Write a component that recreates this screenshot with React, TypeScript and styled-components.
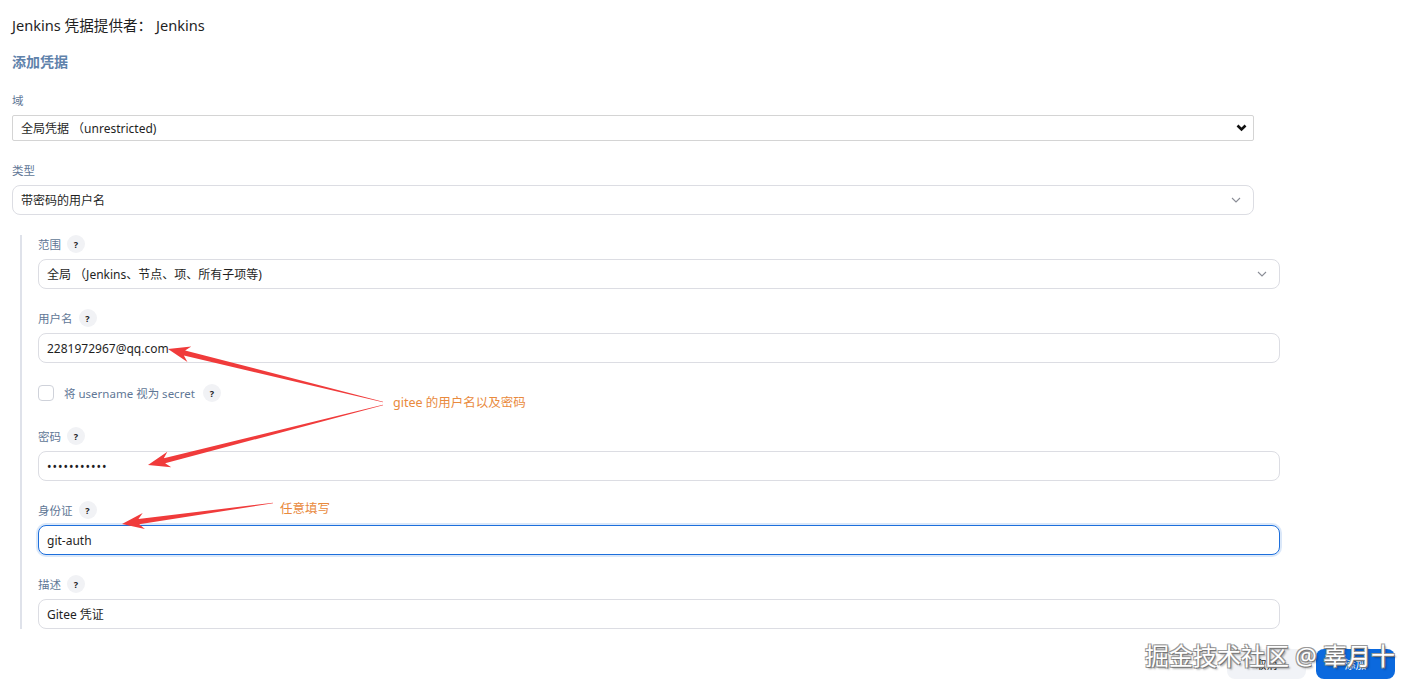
import styled, { createGlobalStyle, css } from "styled-components";

const GlobalStyle = createGlobalStyle`
  html, body {
    margin: 0;
    padding: 0;
    background: #ffffff;
  }
  body {
    font-family: "Noto Sans", "Noto Sans CJK SC", sans-serif;
    color: #1f1f1f;
  }
`;

const Page = styled.div`
  position: relative;
  width: 1427px;
  height: 690px;
  overflow: hidden;
  padding: 16px 0 0 12px;
  box-sizing: border-box;
`;

const Provider = styled.div`
  font-size: 14.6px;
  line-height: 18px;
  color: #1f1f1f;
`;

const Heading = styled.h2`
  margin: 19px 0 0;
  font-size: 14px;
  line-height: 18px;
  font-weight: 700;
  color: #5f82ab;
`;

const Field = styled.div<{ $gap?: number }>`
  display: flex;
  flex-direction: column;
  width: 1242px;
  margin-top: ${(p) => p.$gap ?? 0}px;
`;

const Label = styled.div`
  display: flex;
  align-items: center;
  gap: 6px;
  height: 18px;
  margin-bottom: 6px;
  font-size: 11.5px;
  color: #5f7796;
`;

const Help = styled.span`
  display: inline-flex;
  align-items: center;
  justify-content: center;
  width: 18px;
  height: 18px;
  border-radius: 50%;
  background: #f1f2f5;
  color: #222;
  font-size: 9px;
  font-weight: 700;
`;

const Control = styled.div<{ $plain?: boolean; $focus?: boolean }>`
  display: flex;
  align-items: center;
  justify-content: space-between;
  height: 30px;
  box-sizing: border-box;
  padding: 0 12px 0 8px;
  border: 1px solid #dcdde3;
  border-radius: 8px;
  background: #fff;
  font-size: 12px;
  color: #1f1f1f;
  ${(p) =>
    p.$plain &&
    css`
      height: 26px;
      border-radius: 2px;
      border-color: #d4d4d4;
      padding-right: 6px;
    `}
  ${(p) =>
    p.$focus &&
    css`
      border: 1.5px solid #1d6fdc;
      box-shadow: 0 0 0 2px rgba(29, 111, 220, 0.16);
    `}
`;

const Section = styled.div`
  margin: 20px 0 0 8px;
  padding: 0 0 0 16px;
  border-left: 2px solid #dfe2ea;
  display: flex;
  flex-direction: column;
`;

const CheckRow = styled.div`
  display: flex;
  align-items: center;
  gap: 10px;
  margin-top: 21px;
  height: 18px;
  font-size: 11.5px;
  color: #5f7796;
`;

const Box = styled.span`
  width: 16px;
  height: 16px;
  box-sizing: border-box;
  border: 1px solid #cfd2da;
  border-radius: 4px;
`;

const HelpGap = styled.span`
  margin-left: -2px;
  display: inline-flex;
`;

const Footer = styled.div`
  display: flex;
  justify-content: flex-end;
  gap: 10px;
  padding-right: 32px;
  margin-top: 20px;
`;

const Button = styled.button<{ $primary?: boolean }>`
  width: 79px;
  height: 30px;
  border: none;
  border-radius: 8px;
  font-family: inherit;
  font-size: 11px;
  background: ${(p) => (p.$primary ? "#0b69de" : "#f1f3f7")};
  color: ${(p) => (p.$primary ? "#fff" : "#222")};
`;

const Note = styled.div<{ $x: number; $y: number }>`
  position: absolute;
  left: ${(p) => p.$x}px;
  top: ${(p) => p.$y}px;
  font-size: 12.5px;
  line-height: 16px;
  color: #e98a3d;
`;

const Watermark = styled.div`
  position: absolute;
  left: 1145px;
  top: 641px;
  font-size: 24px;
  line-height: 30px;
  color: #ffffff;
  white-space: nowrap;
  text-shadow: 1px 1px 0 #777, -1px -1px 0 #999, 1px -1px 0 #999, -1px 1px 0 #999,
    2px 2px 2px rgba(0, 0, 0, 0.35);
`;

const Overlay = styled.svg`
  position: absolute;
  left: 0;
  top: 0;
  pointer-events: none;
`;

function arrowPoints(tx: number, ty: number, ex: number, ey: number) {
  const dx = ex - tx;
  const dy = ey - ty;
  const len = Math.hypot(dx, dy);
  const ux = dx / len;
  const uy = dy / len;
  const px = -uy;
  const py = ux;
  const headLen = 22;
  const headW = 8;
  const neck = 2.6;
  const bx = tx + ux * headLen;
  const by = ty + uy * headLen;
  const nx = tx + ux * (headLen - 5);
  const ny = ty + uy * (headLen - 5);
  const pts = [
    [tx, ty],
    [bx + px * headW, by + py * headW],
    [nx + px * neck, ny + py * neck],
    [ex + px * 0.3, ey + py * 0.3],
    [ex - px * 0.3, ey - py * 0.3],
    [nx - px * neck, ny - py * neck],
    [bx - px * headW, by - py * headW],
  ];
  return pts.map((p) => p.join(",")).join(" ");
}

const Chevron = ({ bold }: { bold?: boolean }) =>
  bold ? (
    <svg width="11" height="8" viewBox="0 0 11 8">
      <path d="M1.5 1.5 L5.5 5.5 L9.5 1.5" fill="none" stroke="#111" strokeWidth="2.6" />
    </svg>
  ) : (
    <svg width="10" height="6" viewBox="0 0 10 6">
      <path d="M1 1 L5 5 L9 1" fill="none" stroke="#8a8d96" strokeWidth="1.1" />
    </svg>
  );

export default function App() {
  return (
    <>
      <GlobalStyle />
      <Page>
        <Provider>Jenkins 凭据提供者： Jenkins</Provider>
        <Heading>添加凭据</Heading>

        <Field $gap={20}>
          <Label>域</Label>
          <Control $plain>
            <span>全局凭据 （unrestricted)</span>
            <Chevron bold />
          </Control>
        </Field>

        <Field $gap={20}>
          <Label>类型</Label>
          <Control>
            <span>带密码的用户名</span>
            <Chevron />
          </Control>
        </Field>

        <Section>
          <Field>
            <Label>
              范围 <Help>?</Help>
            </Label>
            <Control>
              <span>全局 （Jenkins、节点、项、所有子项等)</span>
              <Chevron />
            </Control>
          </Field>

          <Field $gap={20}>
            <Label>
              用户名 <Help>?</Help>
            </Label>
            <Control>2281972967@qq.com</Control>
          </Field>

          <CheckRow>
            <Box />
            <span>将 username 视为 secret</span>
            <HelpGap>
              <Help>?</Help>
            </HelpGap>
          </CheckRow>

          <Field $gap={25}>
            <Label>
              密码 <Help>?</Help>
            </Label>
            <Control style={{ letterSpacing: "1px" }}>•••••••••••</Control>
          </Field>

          <Field $gap={20}>
            <Label>
              身份证 <Help>?</Help>
            </Label>
            <Control $focus>git-auth</Control>
          </Field>

          <Field $gap={20}>
            <Label>
              描述 <Help>?</Help>
            </Label>
            <Control>Gitee 凭证</Control>
          </Field>
        </Section>

        <Footer>
          <Button>取消</Button>
          <Button $primary>添加</Button>
        </Footer>

        <Overlay width="1427" height="690" viewBox="0 0 1427 690">
          <polygon points={arrowPoints(168, 349, 383, 402)} fill="#f03b3b" />
          <polygon points={arrowPoints(148, 465, 383, 405)} fill="#f03b3b" />
          <polygon points={arrowPoints(122, 524, 273, 503)} fill="#f03b3b" />
        </Overlay>
        <Note $x={393} $y={395}>gitee 的用户名以及密码</Note>
        <Note $x={280} $y={501}>任意填写</Note>
        <Watermark>掘金技术社区 @ 辜月十</Watermark>
      </Page>
    </>
  );
}
